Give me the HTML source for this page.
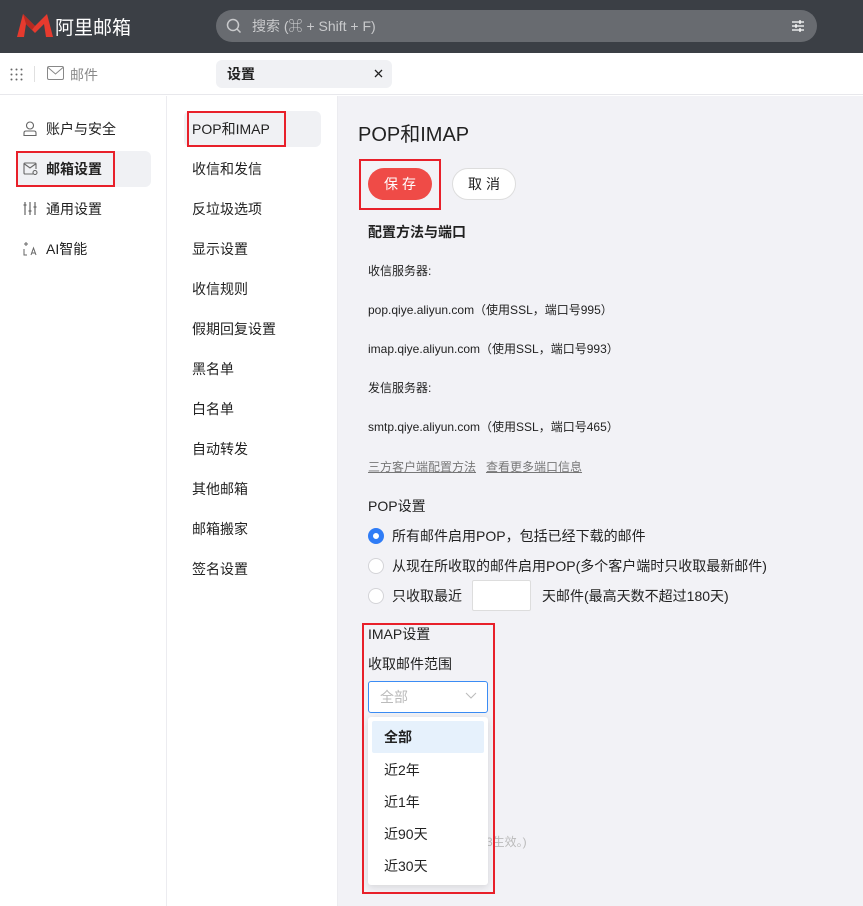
<!DOCTYPE html>
<html><head><meta charset="utf-8"><style>
*{margin:0;padding:0;box-sizing:border-box}
body{width:863px;height:906px;overflow:hidden;font-family:"Liberation Sans","Noto Sans CJK SC",sans-serif;color:#222;background:#fff;position:relative}
.abs{position:absolute}
.top{left:0;top:0;width:863px;height:53px;background:#3b3f45}
.search{left:216px;top:10px;width:601px;height:32px;border-radius:16px;background:#686b70;color:#c9cacc;font-size:14px;line-height:32px;padding-left:36px}
.tabbar{left:0;top:53px;width:863px;height:42px;background:#fff;border-bottom:1px solid #e8e8ec}
.tab{left:216px;top:60px;width:176px;height:28px;background:#f0f1f4;border-radius:6px;font-size:14px;font-weight:bold;line-height:28px;padding-left:11px}
.side1{left:0;top:96px;width:167px;height:810px;background:#fff;border-right:1px solid #ececf0}
.side2{left:168px;top:96px;width:170px;height:810px;background:#fff;border-right:1px solid #ececf0}
.main{left:338px;top:96px;width:525px;height:810px;background:#f2f2f6}
.s1item{position:absolute;left:46px;font-size:14px;color:#222}
.s2item{position:absolute;left:192px;font-size:14px;color:#222}
.red{position:absolute;border:2px solid #e8202a}
.t{position:absolute;font-size:12px;color:#222;white-space:nowrap}
.radio{position:absolute;left:368px;width:16px;height:16px;border-radius:50%;border:1px solid #d4d4d8;background:#fff}
.r14{position:absolute;font-size:14px;color:#222;white-space:nowrap}
</style></head><body>
<div class="abs top"></div>
<svg class="abs" style="left:17px;top:13px" width="36" height="25" viewBox="0 0 36 25"><path d="M0 24 L6 1 L18 13 L30 1 L36 24 L29 24 L27 11 L18 20 L9 11 L7 24 Z" fill="#e63a2e"/><path d="M6 1 L18 13 L15 17 L9 11Z" fill="#b62a22"/></svg>
<div class="abs" style="left:55px;top:13px;color:#fff;font-size:19px;font-weight:normal;letter-spacing:0px">阿里邮箱</div>
<div class="abs search">搜索 (⌘ + Shift + F)</div>
<svg class="abs" style="left:226px;top:18px" width="16" height="16" viewBox="0 0 16 16"><circle cx="7" cy="7" r="5.5" stroke="#c9cacc" stroke-width="1.5" fill="none"/><path d="M11 11 L14.5 14.5" stroke="#c9cacc" stroke-width="1.5"/></svg>
<svg class="abs" style="left:791px;top:19px" width="14" height="14" viewBox="0 0 14 14" stroke="#fff" stroke-width="1.3"><path d="M1 3H13M1 7H13M1 11H13M9 1V5M5 5V9M9 9V13"/></svg>
<div class="abs tabbar"></div>
<svg class="abs" style="left:10px;top:68px" width="13" height="13" viewBox="0 0 13 13" fill="#666"><circle cx="1.5" cy="1.5" r="1"/><circle cx="6.5" cy="1.5" r="1"/><circle cx="11.5" cy="1.5" r="1"/><circle cx="1.5" cy="6.5" r="1"/><circle cx="6.5" cy="6.5" r="1"/><circle cx="11.5" cy="6.5" r="1"/><circle cx="1.5" cy="11.5" r="1"/><circle cx="6.5" cy="11.5" r="1"/><circle cx="11.5" cy="11.5" r="1"/></svg>
<div class="abs" style="left:34px;top:66px;width:1px;height:16px;background:#e0e0e0"></div>
<svg class="abs" style="left:47px;top:66px" width="17" height="14" viewBox="0 0 17 14"><rect x="0.5" y="0.5" width="16" height="13" rx="1.5" fill="none" stroke="#888"/><path d="M1 1.5 L8.5 8 L16 1.5" fill="none" stroke="#888"/></svg>
<div class="abs" style="left:70px;top:65px;font-size:14px;color:#888">邮件</div>
<div class="abs tab">设置</div>
<svg class="abs" style="left:374px;top:69px" width="9" height="9" viewBox="0 0 9 9"><path d="M1 1L8 8M8 1L1 8" stroke="#222" stroke-width="1.3"/></svg>

<div class="abs side1"></div>
<div class="abs side2"></div>
<div class="abs main"></div>

<svg class="abs" style="left:23px;top:121px" width="14" height="15" viewBox="0 0 14 15" fill="none" stroke="#666" stroke-width="1.1"><circle cx="7" cy="4.5" r="3.5"/><path d="M1 14.5 V12 Q1 10 3 10 H11 Q13 10 13 12 V14.5 Z"/></svg>
<div class="s1item" style="top:119px">账户与安全</div>
<div class="abs" style="left:16px;top:151px;width:135px;height:36px;background:#f0f1f4;border-radius:6px"></div>
<svg class="abs" style="left:23px;top:162px" width="15" height="13" viewBox="0 0 15 13" fill="none" stroke="#666" stroke-width="1.1"><path d="M10 12H2Q1 12 1 11V2Q1 1 2 1H12Q13 1 13 2V7"/><path d="M1.5 2 L7 6 L12.5 2"/><circle cx="12" cy="10.5" r="2"/></svg>
<div class="s1item" style="top:159px;font-weight:bold">邮箱设置</div>
<div class="red" style="left:16px;top:151px;width:99px;height:36px"></div>
<svg class="abs" style="left:23px;top:201px" width="14" height="15" viewBox="0 0 14 15" stroke="#666" stroke-width="1.2"><path d="M2 1V14M7 1V14M12 1V14M0.5 4H3.5M5.5 10H8.5M10.5 6H13.5"/></svg>
<div class="s1item" style="top:199px">通用设置</div>
<svg class="abs" style="left:23px;top:241px" width="14" height="15" viewBox="0 0 14 15" fill="none" stroke="#666" stroke-width="1"><path d="M3 1V5M1 3H5M1 8V14H4M8 14L10.5 7L13 14M9 12H12"/></svg>
<div class="s1item" style="top:239px">AI智能</div>

<div class="abs" style="left:184px;top:111px;width:137px;height:36px;background:#f0f1f4;border-radius:6px"></div>
<div class="red" style="left:187px;top:111px;width:99px;height:36px"></div>
<div class="s2item" style="top:119px">POP和IMAP</div>
<div class="s2item" style="top:159px">收信和发信</div>
<div class="s2item" style="top:199px">反垃圾选项</div>
<div class="s2item" style="top:239px">显示设置</div>
<div class="s2item" style="top:279px">收信规则</div>
<div class="s2item" style="top:319px">假期回复设置</div>
<div class="s2item" style="top:359px">黑名单</div>
<div class="s2item" style="top:399px">白名单</div>
<div class="s2item" style="top:439px">自动转发</div>
<div class="s2item" style="top:479px">其他邮箱</div>
<div class="s2item" style="top:519px">邮箱搬家</div>
<div class="s2item" style="top:559px">签名设置</div>

<div class="abs" style="left:358px;top:118px;font-size:20px;color:#222">POP和IMAP</div>
<div class="red" style="left:359px;top:159px;width:82px;height:51px"></div>
<div class="abs" style="left:368px;top:168px;width:64px;height:32px;border-radius:16px;background:#ef4b47;color:#fff;font-size:14px;line-height:32px;text-align:center;letter-spacing:4px;padding-left:4px">保存</div>
<div class="abs" style="left:452px;top:168px;width:64px;height:32px;border-radius:16px;background:#fff;border:1px solid #ddd;color:#222;font-size:14px;line-height:30px;text-align:center;letter-spacing:4px;padding-left:4px">取消</div>
<div class="r14" style="left:368px;top:222px;font-weight:bold">配置方法与端口</div>
<div class="t" style="left:368px;top:262px">收信服务器:</div>
<div class="t" style="left:368px;top:301px">pop.qiye.aliyun.com（使用SSL，端口号995）</div>
<div class="t" style="left:368px;top:340px">imap.qiye.aliyun.com（使用SSL，端口号993）</div>
<div class="t" style="left:368px;top:379px">发信服务器:</div>
<div class="t" style="left:368px;top:418px">smtp.qiye.aliyun.com（使用SSL，端口号465）</div>
<div class="t" style="left:368px;top:458px;color:#777;text-decoration:underline">三方客户端配置方法</div>
<div class="t" style="left:486px;top:458px;color:#777;text-decoration:underline">查看更多端口信息</div>
<div class="r14" style="left:368px;top:496px">POP设置</div>
<div class="radio" style="top:528px;border:5px solid #2f7cf6"></div>
<div class="r14" style="left:392px;top:526px">所有邮件启用POP，包括已经下载的邮件</div>
<div class="radio" style="top:558px"></div>
<div class="r14" style="left:392px;top:556px">从现在所收取的邮件启用POP(多个客户端时只收取最新邮件)</div>
<div class="radio" style="top:588px"></div>
<div class="r14" style="left:392px;top:586px">只收取最近</div>
<div class="abs" style="left:472px;top:580px;width:59px;height:31px;background:#fff;border:1px solid #ddd;border-radius:2px"></div>
<div class="r14" style="left:542px;top:586px">天邮件(最高天数不超过180天)</div>

<div class="r14" style="left:368px;top:624px">IMAP设置</div>
<div class="r14" style="left:368px;top:654px">收取邮件范围</div>
<div class="abs" style="left:368px;top:681px;width:120px;height:32px;background:#fff;border:1px solid #3b8cf4;border-radius:3px;font-size:14px;color:#bbb;line-height:30px;padding-left:11px">全部</div>
<svg class="abs" style="left:465px;top:692px" width="12" height="8" viewBox="0 0 12 8"><path d="M1 1 L6 6 L11 1" fill="none" stroke="#bbb" stroke-width="1"/></svg>
<div class="t" style="left:486px;top:833px;color:#bbb">3生效。)</div>
<div class="abs" style="left:368px;top:717px;width:120px;height:168px;background:#fff;border-radius:3px;box-shadow:0 2px 8px rgba(0,0,0,0.12)"></div>
<div class="abs" style="left:372px;top:721px;width:112px;height:32px;background:#e6f1fc;border-radius:2px"></div>
<div class="r14" style="left:384px;top:727px;font-weight:bold">全部</div>
<div class="r14" style="left:384px;top:760px">近2年</div>
<div class="r14" style="left:384px;top:792px">近1年</div>
<div class="r14" style="left:384px;top:824px">近90天</div>
<div class="r14" style="left:384px;top:856px">近30天</div>
<div class="red" style="left:362px;top:623px;width:133px;height:271px"></div>
</body></html>
